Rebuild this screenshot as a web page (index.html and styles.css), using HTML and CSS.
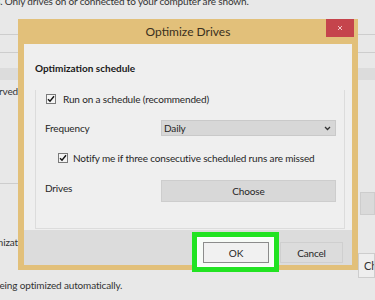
FILE: index.html
```html
<!DOCTYPE html>
<html lang="en">
<head>
    <meta charset="UTF-8">
    <meta name="viewport" content="width=device-width, initial-scale=1.0">
    <title>Optimize Drives</title>
    <link rel="stylesheet" href="styles.css">
</head>
<body>
<div class="bg">
    <div class="bg-top">s. Only drives on or connected to your computer are shown.</div>
    <div class="rule rule-a"></div>
    <div class="rule rule-b"></div>
    <div class="band"></div>
    <div class="bg-row row-rved"><span class="clip">System Reserved</span></div>
    <div class="rule rule-c"></div>
    <div class="bg-row row-btn"><span class="side-box"></span></div>
    <div class="bg-row row-nizat"><span class="clip">Optimizat</span></div>
    <div class="bg-row row-ch"><span class="side-box ch">Change settings</span></div>
    <div class="bg-bottom">being optimized automatically.</div>
</div>

<div class="dialog">
    <div class="titlebar">
        <span class="title">Optimize Drives</span>
        <span class="close">
            <svg width="6" height="6" viewBox="0 0 6 6"><path d="M1 1L5 5M5 1L1 5" stroke="#f2c6c8" stroke-width="1"/></svg>
        </span>
    </div>
    <div class="content">
        <div class="heading">Optimization schedule</div>
        <div class="group">
            <div class="row check-row">
                <span class="checkbox">
                    <svg width="8" height="8" viewBox="0 0 8 8"><path d="M1 4.2L3 6.3L7 1.3" fill="none" stroke="#111" stroke-width="1.4"/></svg>
                </span>
                <span>Run on a schedule (recommended)</span>
            </div>
            <div class="row field-row">
                <span class="label">Frequency</span>
                <div class="select">
                    <span>Daily</span>
                    <svg width="7" height="5" viewBox="0 0 7 5"><path d="M1 1L3.5 3.5L6 1" fill="none" stroke="#333" stroke-width="1.3"/></svg>
                </div>
            </div>
            <div class="row check-row indent">
                <span class="checkbox">
                    <svg width="8" height="8" viewBox="0 0 8 8"><path d="M1 4.2L3 6.3L7 1.3" fill="none" stroke="#111" stroke-width="1.4"/></svg>
                </span>
                <span>Notify me if three consecutive scheduled runs are missed</span>
            </div>
            <div class="row field-row drives-row">
                <span class="label">Drives</span>
                <div class="choose">Choose</div>
            </div>
        </div>
    </div>
    <div class="footer">
        <span class="highlight"></span>
        <div class="btn ok">OK</div>
        <div class="btn cancel">Cancel</div>
    </div>
</div>
</body>
</html>
```

FILE: styles.css
```css
body {
    margin: 0;
    height: 300px;
    overflow: hidden;
    position: relative;
    background-color: #e8e8e8;
    font-family: Lato, "Noto Sans", sans-serif;
    color: #262626;
    letter-spacing: -0.15px;
}
.bg {
    display: flex;
    flex-direction: column;
    font-size: 10px;
    color: #333;
}
.bg-top {
    height: 12px;
    line-height: 12px;
    margin-top: -5px;
    white-space: nowrap;
    margin-left: -4px;
}
.rule {
    height: 1px;
    background-color: #cdcdcd;
}
.rule-a {
    margin-top: 27px;
}
.rule-b {
    margin-top: 17px;
}
.band {
    margin-top: 15px;
    height: 12px;
    background-color: #dcdcdc;
}
.bg-row {
    display: flex;
    white-space: nowrap;
}
.clip {
    width: 18px;
    overflow: hidden;
    display: flex;
    justify-content: flex-end;
    line-height: 14px;
}
.row-rved {
    margin-top: 4px;
}
.rule-c {
    margin-top: 85px;
    width: 18px;
}
.row-btn {
    margin-top: 8px;
    height: 23px;
}
.side-box {
    margin-left: 360px;
    width: 20px;
    height: 23px;
    background-color: #dadada;
    border: 1px solid #cdcdcd;
    box-sizing: border-box;
}
.row-nizat {
    margin-top: 20px;
}
.row-ch {
    margin-top: 4px;
}
.side-box.ch {
    margin-left: 358px;
    width: 30px;
    height: 25px;
    background-color: #eeeeee;
    padding-left: 5px;
    line-height: 23px;
    overflow: hidden;
    font-size: 11px;
}
.bg-bottom {
    line-height: 14px;
    margin-left: -6px;
    white-space: nowrap;
}

.dialog {
    position: absolute;
    left: 18px;
    top: 19px;
    width: 340px;
    background-color: #e2c07a;
    padding: 0 6px 5px 6px;
    box-sizing: border-box;
}
.titlebar {
    height: 25px;
    display: flex;
    justify-content: center;
    align-items: center;
    position: relative;
}
.title {
    font-size: 12px;
    letter-spacing: 0;
    color: #3a3020;
}
.close {
    position: absolute;
    right: -2px;
    top: 0;
    width: 28px;
    height: 18px;
    background-color: #c5444c;
    display: flex;
    justify-content: center;
    align-items: center;
}
.content {
    background-color: #efefef;
    height: 186px;
    padding: 16px 0 0 11px;
    box-sizing: border-box;
    font-size: 10px;
}
.heading {
    font-weight: bold;
    line-height: 16px;
    letter-spacing: 0;
    color: #1a1a1a;
}
.group {
    margin-top: 4px;
    width: 310px;
    height: 139px;
    border: 1px solid #dcdcdc;
    border-top: none;
    box-sizing: border-box;
}
.row {
    display: flex;
    align-items: center;
}
.check-row {
    height: 18px;
    padding-left: 10px;
    margin-top: 14px;
    gap: 7px;
    white-space: nowrap;
}
.check-row.indent {
    padding-left: 22px;
    margin-top: 13px;
    gap: 5px;
}
.checkbox {
    width: 10px;
    height: 10px;
    border: 1px solid #7a7a7a;
    background-color: #f4f4f4;
    display: flex;
    justify-content: center;
    align-items: center;
    box-sizing: border-box;
}
.field-row {
    padding-left: 9px;
    margin-top: 12px;
}
.label {
    width: 116px;
}
.select {
    width: 175px;
    height: 16px;
    background-color: #d7d7d7;
    border: 1px solid #c9c9c9;
    box-sizing: border-box;
    display: flex;
    justify-content: space-between;
    align-items: center;
    padding: 0 4px 0 2px;
}
.drives-row {
    align-items: flex-start;
    margin-top: 13px;
}
.drives-row .label {
    line-height: 14px;
    padding-top: 1px;
}
.choose {
    width: 175px;
    height: 22px;
    background-color: #d8d8d8;
    border: 1px solid #cdcdcd;
    box-sizing: border-box;
    display: flex;
    justify-content: center;
    align-items: center;
}
.footer {
    position: relative;
    height: 35px;
    background-color: #dcdcdc;
    display: flex;
    justify-content: flex-end;
    align-items: flex-start;
    padding: 12px 9px 0 0;
    box-sizing: border-box;
    gap: 11px;
    font-size: 10px;
}
.highlight {
    position: absolute;
    left: 168px;
    top: 2px;
    width: 87px;
    height: 40px;
    border: 5px solid #22e322;
    background-color: #f7fbf7;
    box-sizing: border-box;
    box-shadow: inset 0 0 3px 1px #ffffff;
}
.btn {
    position: relative;
    height: 21px;
    box-sizing: border-box;
    display: flex;
    justify-content: center;
    align-items: center;
}
.ok {
    width: 66px;
    background-color: #f1f1f1;
    border: 1px solid #8c8c8c;
}
.cancel {
    width: 63px;
    background-color: #dcdcdc;
    border: 1px solid #cfcfcf;
}
```
